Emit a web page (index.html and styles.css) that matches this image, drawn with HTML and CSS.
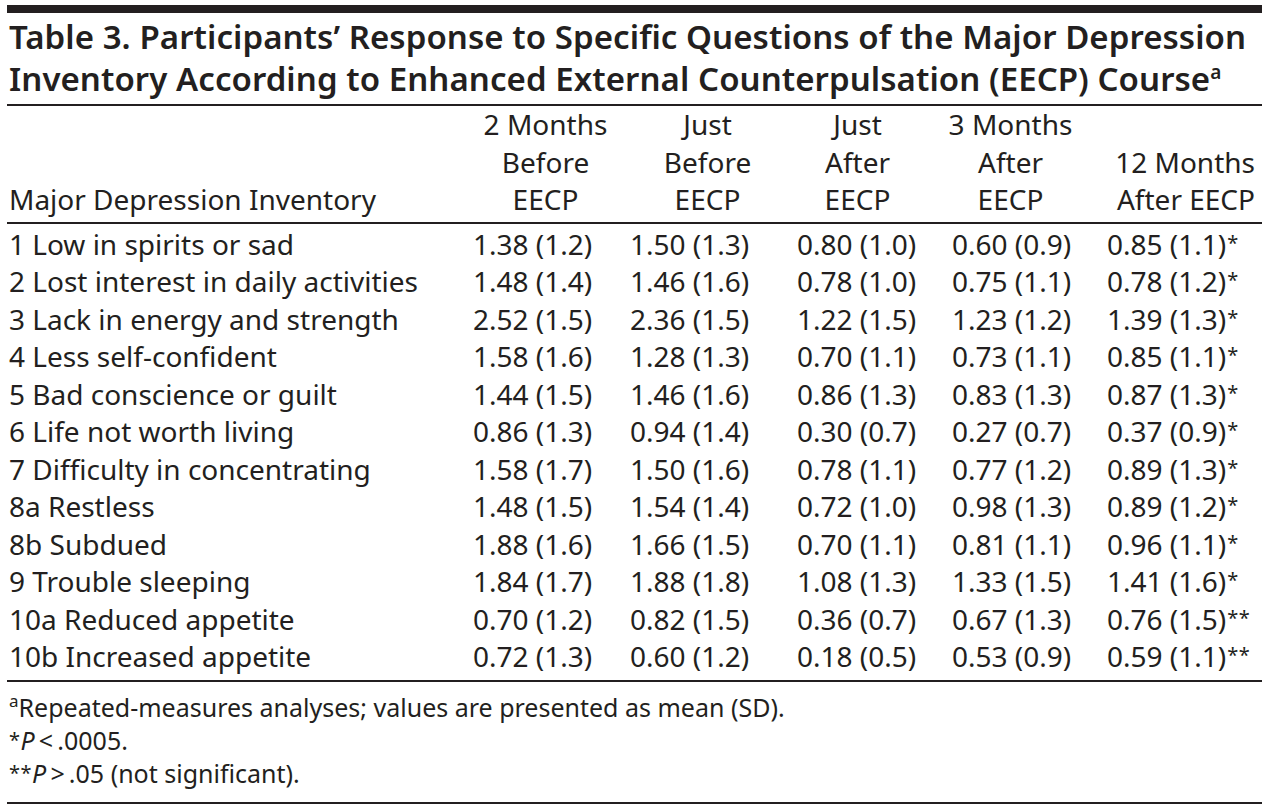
FILE: index.html
```html
<!DOCTYPE html>
<html lang="en">
<head>
<meta charset="utf-8">
<title>Table 3</title>
<link rel="stylesheet" href="styles.css">
</head>
<body>
<div class="page">
  <h1 class="title">Table 3. Participants’ Response to Specific Questions of the Major Depression<br>Inventory According to Enhanced External Counterpulsation (EECP) Course<sup>a</sup></h1>
  <table class="data">
    <colgroup>
      <col class="c1"><col class="c2"><col class="c3"><col class="c4"><col class="c5"><col class="c6">
    </colgroup>
    <thead>
      <tr>
        <th class="lab">Major Depression Inventory</th>
        <th class="h2">2 Months<br>Before<br>EECP</th>
        <th class="h3">Just<br>Before<br>EECP</th>
        <th class="h4">Just<br>After<br>EECP</th>
        <th class="h5">3 Months<br>After<br>EECP</th>
        <th class="h6">12 Months<br>After EECP</th>
      </tr>
    </thead>
    <tbody>
      <tr><td>1 Low in spirits or sad</td><td>1.38 (1.2)</td><td>1.50 (1.3)</td><td>0.80 (1.0)</td><td>0.60 (0.9)</td><td>0.85 (1.1)<span class="ast">*</span></td></tr>
      <tr><td>2 Lost interest in daily activities</td><td>1.48 (1.4)</td><td>1.46 (1.6)</td><td>0.78 (1.0)</td><td>0.75 (1.1)</td><td>0.78 (1.2)<span class="ast">*</span></td></tr>
      <tr><td>3 Lack in energy and strength</td><td>2.52 (1.5)</td><td>2.36 (1.5)</td><td>1.22 (1.5)</td><td>1.23 (1.2)</td><td>1.39 (1.3)<span class="ast">*</span></td></tr>
      <tr><td>4 Less self-confident</td><td>1.58 (1.6)</td><td>1.28 (1.3)</td><td>0.70 (1.1)</td><td>0.73 (1.1)</td><td>0.85 (1.1)<span class="ast">*</span></td></tr>
      <tr><td>5 Bad conscience or guilt</td><td>1.44 (1.5)</td><td>1.46 (1.6)</td><td>0.86 (1.3)</td><td>0.83 (1.3)</td><td>0.87 (1.3)<span class="ast">*</span></td></tr>
      <tr><td>6 Life not worth living</td><td>0.86 (1.3)</td><td>0.94 (1.4)</td><td>0.30 (0.7)</td><td>0.27 (0.7)</td><td>0.37 (0.9)<span class="ast">*</span></td></tr>
      <tr><td>7 Difficulty in concentrating</td><td>1.58 (1.7)</td><td>1.50 (1.6)</td><td>0.78 (1.1)</td><td>0.77 (1.2)</td><td>0.89 (1.3)<span class="ast">*</span></td></tr>
      <tr><td>8a Restless</td><td>1.48 (1.5)</td><td>1.54 (1.4)</td><td>0.72 (1.0)</td><td>0.98 (1.3)</td><td>0.89 (1.2)<span class="ast">*</span></td></tr>
      <tr><td>8b Subdued</td><td>1.88 (1.6)</td><td>1.66 (1.5)</td><td>0.70 (1.1)</td><td>0.81 (1.1)</td><td>0.96 (1.1)<span class="ast">*</span></td></tr>
      <tr><td>9 Trouble sleeping</td><td>1.84 (1.7)</td><td>1.88 (1.8)</td><td>1.08 (1.3)</td><td>1.33 (1.5)</td><td>1.41 (1.6)<span class="ast">*</span></td></tr>
      <tr><td>10a Reduced appetite</td><td>0.70 (1.2)</td><td>0.82 (1.5)</td><td>0.36 (0.7)</td><td>0.67 (1.3)</td><td>0.76 (1.5)<span class="ast">**</span></td></tr>
      <tr><td>10b Increased appetite</td><td>0.72 (1.3)</td><td>0.60 (1.2)</td><td>0.18 (0.5)</td><td>0.53 (0.9)</td><td>0.59 (1.1)<span class="ast">**</span></td></tr>
    </tbody>
  </table>
  <div class="notes">
    <p><sup class="sa">a</sup>Repeated-measures analyses; values are presented as mean (SD).</p>
    <p><span class="nast">*</span><i>P</i>&#8201;&lt;&#8201;.0005.</p>
    <p><span class="nast">**</span><i>P</i>&#8201;&gt;&#8201;.05 (not significant).</p>
  </div>
</div>
</body>
</html>
```
FILE: styles.css
```css
html, body {
  margin: 0;
  padding: 0;
  background: #ffffff;
}

.page {
  margin: 5px 11px 0 7px;
  color: #231f20;
  font-family: "Noto Sans", "Open Sans", "DejaVu Sans", sans-serif;
}

.title {
  margin: 0;
  border-top: 8px solid #231f20;
  border-bottom: 2px solid #231f20;
  padding: 3px 0 4px 2px;
  font-size: 33px;
  font-weight: 600;
  line-height: 42px;
  letter-spacing: 0.06px;
}

.title sup {
  font-size: 19px;
  line-height: 0;
  vertical-align: 12px;
  letter-spacing: 0;
}

.data {
  width: 100%;
  border-collapse: collapse;
  table-layout: fixed;
  font-size: 28px;
  line-height: 37.5px;
}

.c1 { width: 458px; }
.c2 { width: 155px; }
.c3 { width: 165px; }
.c4 { width: 155px; }
.c5 { width: 155px; }
.c6 { width: 167px; }

.data th {
  font-weight: 400;
  vertical-align: bottom;
  padding: 0 0 3px 0;
  text-align: center;
  border-bottom: 2px solid #231f20;
  white-space: nowrap;
}

.data th.lab {
  text-align: left;
  padding-left: 2px;
}

.data th.h2 { padding-left: 6px; }
.data th.h3 { padding-left: 10px; }
.data th.h4 { padding-right: 10px; }
.data th.h5 { padding-right: 14px; }
.data th.h6 { text-align: right; padding-right: 7px; }

.data td {
  padding: 0 0 0 12px;
  white-space: nowrap;
}

.data td:first-child { padding-left: 2px; }
.data td:nth-child(2) { padding-left: 8px; }
.data td:nth-child(3) { padding-left: 10px; }

.data tbody tr:first-child td { padding-top: 2px; }
.data tbody tr:last-child td {
  padding-bottom: 4px;
  border-bottom: 2px solid #231f20;
}

.ast {
  font-size: 20px;
  line-height: 0;
  vertical-align: 5px;
  letter-spacing: 0.5px;
  margin-left: 1px;
}

.notes {
  border-bottom: 2px solid #231f20;
  padding: 9px 0 12px 2px;
  font-size: 25px;
  line-height: 33px;
}

.notes p { margin: 0; }

.notes sup {
  font-size: 17px;
  line-height: 0;
  vertical-align: 10px;
}

.nast {
  font-size: 20px;
  letter-spacing: 0.5px;
  vertical-align: 3px;
  line-height: 0;
}
```
